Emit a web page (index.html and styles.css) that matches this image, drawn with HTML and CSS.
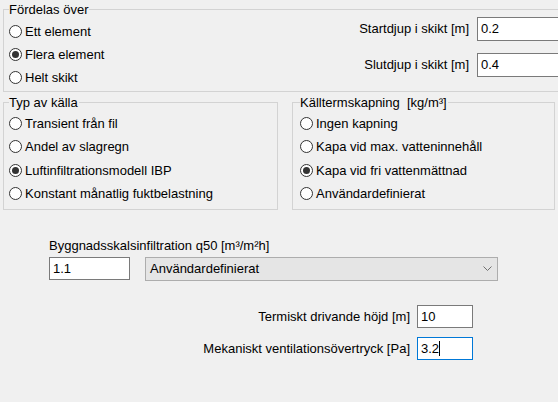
FILE: index.html
```html
<!DOCTYPE html>
<html lang="sv">
<head>
    <meta charset="UTF-8">
    <title>Källa</title>
    <link rel="stylesheet" href="styles.css">
</head>
<body>
    <div class="page">
        <!-- Fördelas över -->
        <fieldset class="group group-spread">
            <legend>Fördelas över</legend>
            <div class="spread-body">
                <div class="radio-list">
                    <label class="radio-row"><input type="radio" name="spread"> Ett element</label>
                    <label class="radio-row"><input type="radio" name="spread" checked> Flera element</label>
                    <label class="radio-row"><input type="radio" name="spread"> Helt skikt</label>
                </div>
                <div class="depth-grid">
                    <span class="field-label">Startdjup i skikt [m]</span>
                    <input class="field depth-field" type="text" value="0.2">
                    <span class="field-label">Slutdjup i skikt [m]</span>
                    <input class="field depth-field" type="text" value="0.4">
                </div>
            </div>
        </fieldset>

        <div class="group-row">
            <!-- Typ av källa -->
            <fieldset class="group group-source">
                <legend>Typ av källa</legend>
                <div class="radio-list tall">
                    <label class="radio-row"><input type="radio" name="source"> Transient från fil</label>
                    <label class="radio-row"><input type="radio" name="source"> Andel av slagregn</label>
                    <label class="radio-row"><input type="radio" name="source" checked> Luftinfiltrationsmodell IBP</label>
                    <label class="radio-row"><input type="radio" name="source"> Konstant månatlig fuktbelastning</label>
                </div>
            </fieldset>

            <!-- Källtermskapning -->
            <fieldset class="group group-cap">
                <legend>Källtermskapning&nbsp; [kg/m³]</legend>
                <div class="radio-list tall">
                    <label class="radio-row"><input type="radio" name="cap"> Ingen kapning</label>
                    <label class="radio-row"><input type="radio" name="cap"> Kapa vid max. vatteninnehåll</label>
                    <label class="radio-row"><input type="radio" name="cap" checked> Kapa vid fri vattenmättnad</label>
                    <label class="radio-row"><input type="radio" name="cap"> Användardefinierat</label>
                </div>
            </fieldset>
        </div>

        <!-- Infiltration -->
        <div class="infiltration">
            <div class="infil-label">Byggnadsskalsinfiltration q50 [m³/m²h]</div>
            <div class="infil-row">
                <input class="field infil-field" type="text" value="1.1">
                <div class="combo">
                    <span>Användardefinierat</span>
                    <svg class="chevron" width="9" height="5" viewBox="0 0 9 5">
                        <polyline points="0.5,0.5 4.5,4.5 8.5,0.5" fill="none" stroke="#707070" stroke-width="1"/>
                    </svg>
                </div>
            </div>
        </div>

        <div class="terms">
            <span class="field-label">Termiskt drivande höjd [m]</span>
            <input class="field term-field" type="text" value="10">
            <span class="field-label">Mekaniskt ventilationsövertryck [Pa]</span>
            <div class="field term-field focused">3.2<span class="caret"></span></div>
        </div>
    </div>
</body>
</html>
```

FILE: styles.css
```css
/* Basic reset */
* {
    margin: 0;
    padding: 0;
    box-sizing: border-box;
}
body {
    width: 558px;
    height: 402px;
    overflow: hidden;
    background: #f0f0f0;
    font-family: "Liberation Sans", Arial, sans-serif;
    font-size: 13px;
    color: #000;
}
.page {
    width: 558px;
    padding: 1px 0 0 3px;
}
/* Group boxes */
.group {
    border: 1px solid #d3d3d3;
    padding: 0 4px 2px 5px;
}
.group legend {
    line-height: 17px;
    padding: 0 1px 0 0;
}
.group-spread {
    width: 555px;
    border-right: none;
    padding-right: 0;
}
.spread-body {
    display: flex;
    justify-content: space-between;
    align-items: flex-start;
}
.group-row {
    display: flex;
    gap: 14px;
    margin-top: 2px;
}
.group-source {
    width: 275px;
}
.group-cap {
    width: 263px;
    padding-left: 7px;
}
/* Radio buttons */
.radio-list {
    display: flex;
    flex-direction: column;
    padding-top: 1.5px;
}
.radio-row {
    display: flex;
    align-items: center;
    gap: 3px;
    height: 23px;
    white-space: nowrap;
}
.radio-list.tall {
    padding-top: 1px;
    padding-bottom: 1px;
}
.radio-list.tall .radio-row {
    height: 23.5px;
}
.radio-row input {
    appearance: none;
    width: 13px;
    height: 13px;
    border: 1px solid #333;
    border-radius: 50%;
    background: #fff;
    display: grid;
    place-items: center;
    flex-shrink: 0;
}
.radio-row input:checked::after {
    content: "";
    width: 7px;
    height: 7px;
    border-radius: 50%;
    background: #333;
}
/* Text fields */
.field {
    height: 24px;
    border: 1px solid #7a7a7a;
    background: #fff;
    font: inherit;
    color: #000;
    padding: 0 3px;
    outline: none;
}
.field-label {
    justify-self: end;
    white-space: nowrap;
}
.depth-grid {
    display: grid;
    grid-template-columns: auto 81px;
    column-gap: 8px;
    row-gap: 12px;
    align-items: center;
    margin-top: -1.5px;
}
.depth-field {
    border-right: none;
}
/* Infiltration */
.infiltration {
    padding-left: 46px;
    margin-top: 28px;
}
.infil-label {
    line-height: 15px;
}
.infil-row {
    display: flex;
    align-items: flex-start;
    gap: 15px;
    margin-top: 4px;
}
.infil-field {
    width: 81px;
    height: 23px;
}
.combo {
    width: 353px;
    height: 24px;
    border: 1px solid #adadad;
    background: #e5e5e5;
    display: flex;
    align-items: center;
    justify-content: space-between;
    padding: 0 5px 0 4px;
}
.chevron {
    display: block;
}
/* Terms */
.terms {
    width: 470px;
    display: grid;
    grid-template-columns: auto 56px;
    justify-content: end;
    align-items: center;
    column-gap: 7px;
    row-gap: 9px;
    margin-top: 24px;
}
.term-field {
    height: 23px;
}
.focused {
    border-color: #0078d7;
    display: flex;
    align-items: center;
}
.caret {
    display: inline-block;
    width: 1px;
    height: 15px;
    background: #000;
}
```
